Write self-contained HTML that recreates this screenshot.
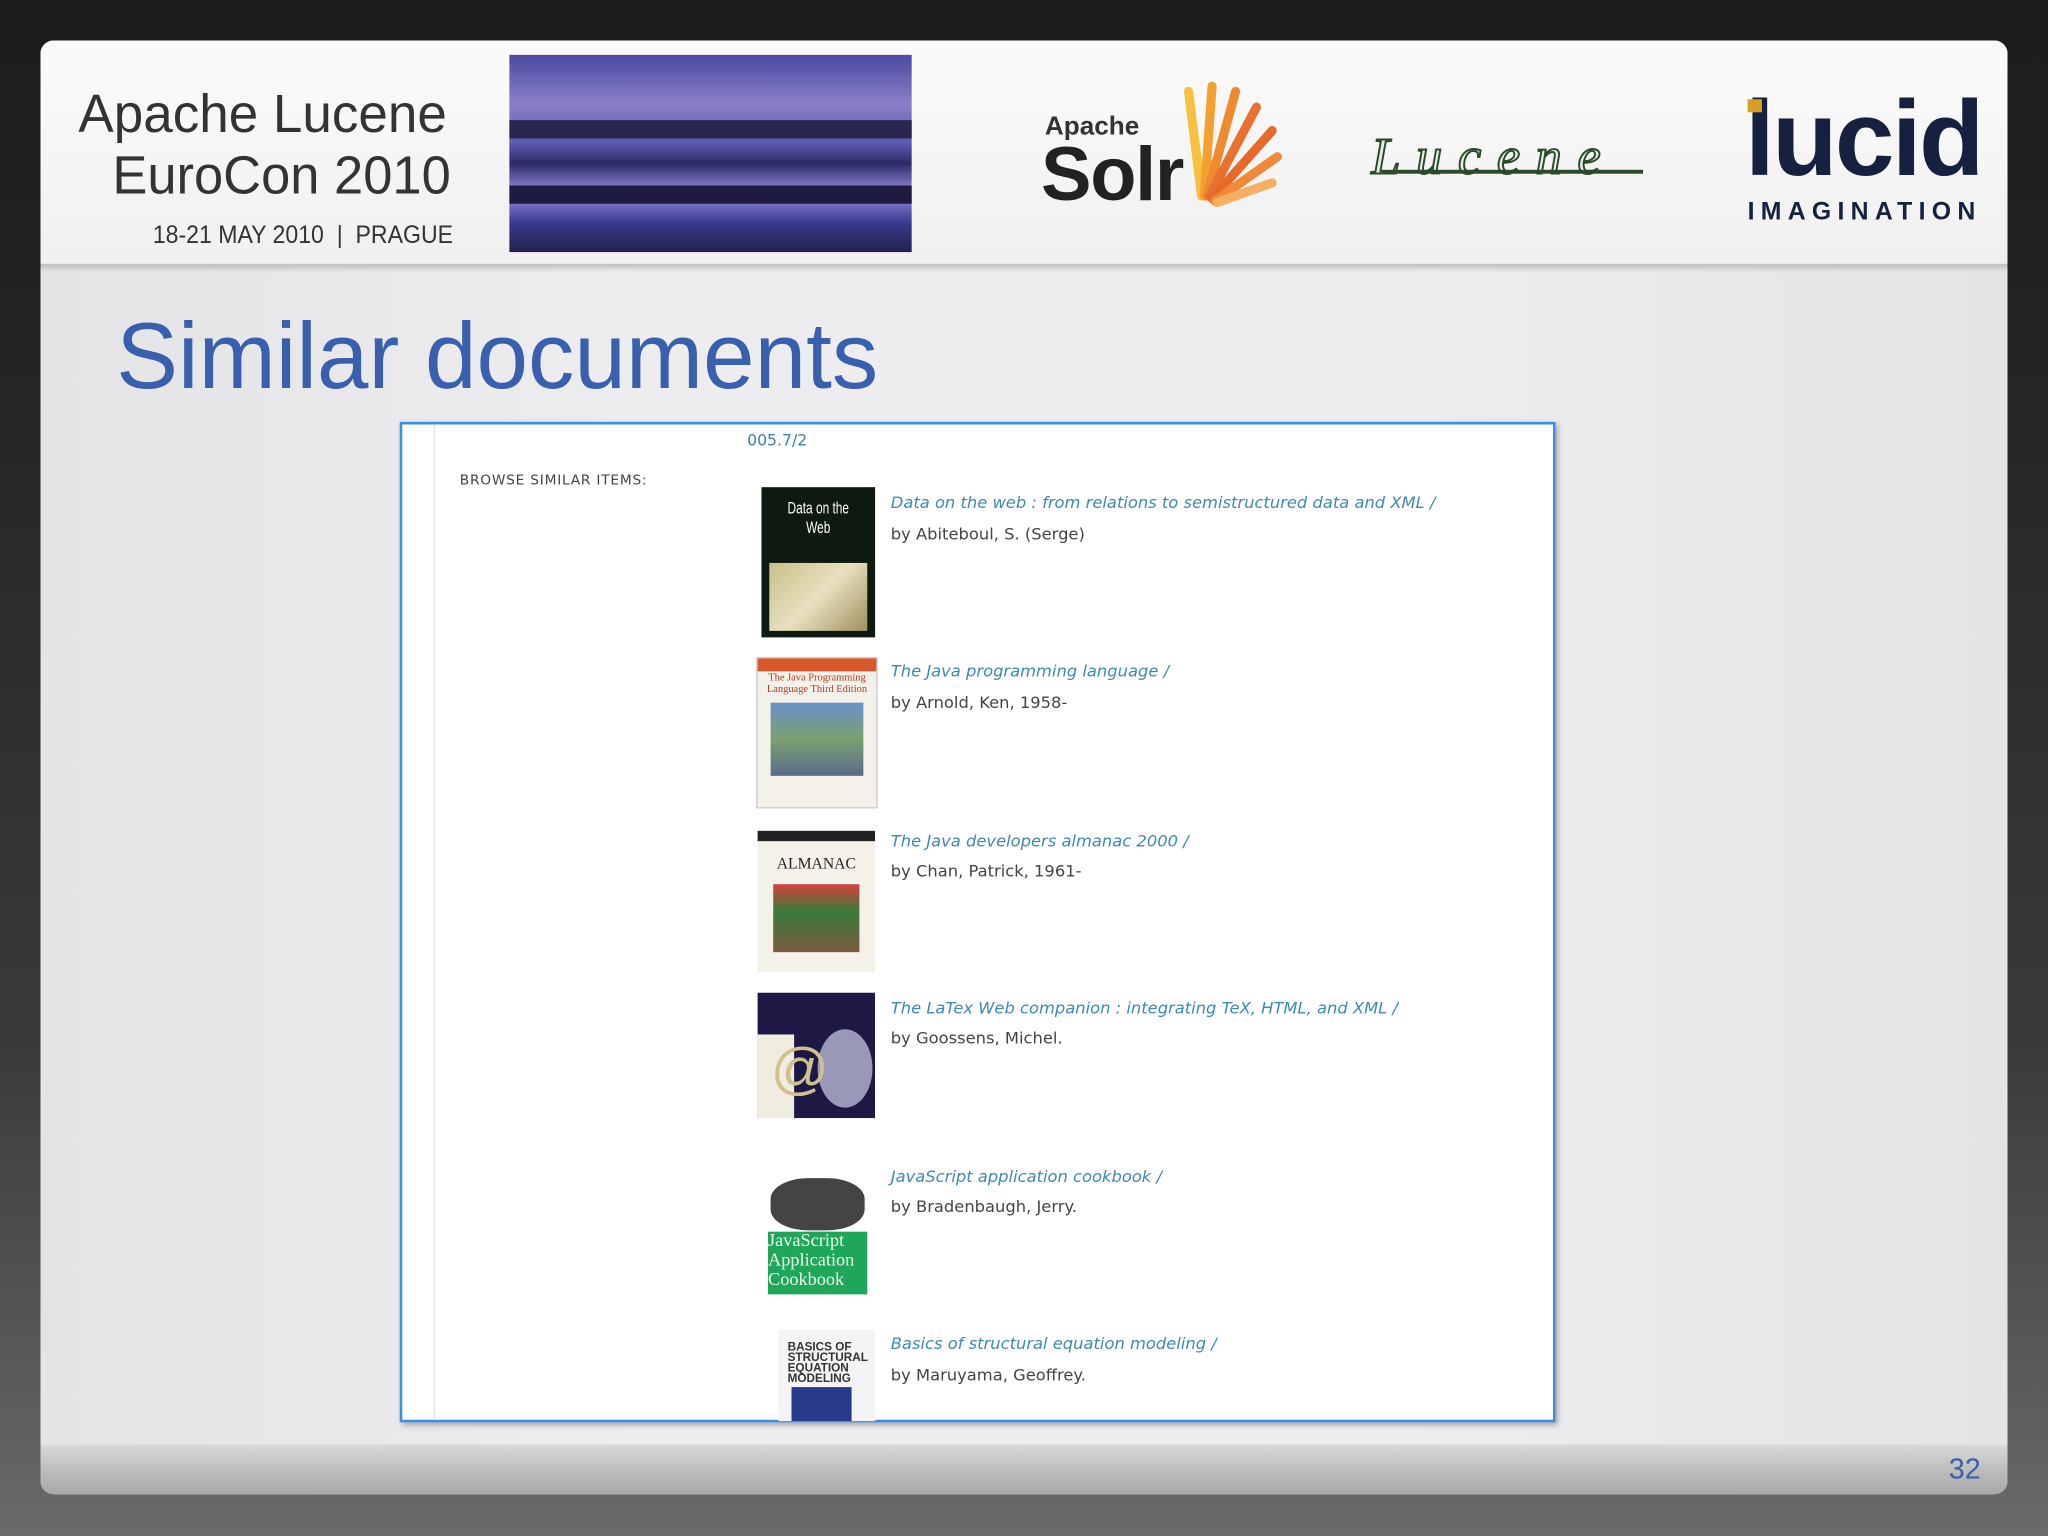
<!DOCTYPE html>
<html><head><meta charset="utf-8"><style>
html,body{margin:0;padding:0;width:2048px;height:1536px;overflow:hidden;background:#1d1d1d}
#w{position:absolute;left:0;top:0;width:1568px;height:1176px;transform:scale(1.306122);transform-origin:0 0;background:linear-gradient(#1c1c1c 0,#252525 300px,#3a3a3a 800px,#6a6a6a 1176px);font-family:"Liberation Sans",sans-serif}
.slide{position:absolute;left:31px;top:31px;width:1506px;height:1113px;border-radius:10px;overflow:hidden;background:linear-gradient(90deg,#e4e4e6,#ededef 30%,#ededef 70%,#e4e4e6)}
.hdr{position:absolute;left:0;top:0;width:1506px;height:171px;background:linear-gradient(#fbfbfb,#f0f0f0);border-bottom:2px solid #c4c4c4;box-shadow:0 2px 3px rgba(0,0,0,.15)}
.ftr{position:absolute;left:0;top:1075px;width:1506px;height:38px;background:linear-gradient(#d9d9d9,#b9b9b9 60%,#a8a8a8)}
.abs{position:absolute;white-space:nowrap}
.box{position:absolute;left:306px;top:323px;width:881px;height:762px;border:2px solid #3b8fe2;background:#fff;box-shadow:2px 2px 4px rgba(0,0,0,.3)}
.t{position:absolute;left:682px;font-family:"DejaVu Sans",sans-serif;font-size:12.5px;white-space:nowrap}
.ti{color:#3f8aae;font-style:italic}
.au{color:#444}
.cv{position:absolute;overflow:hidden}
</style></head><body><div id="w">
<div class="slide">
 <div class="hdr"></div>
 <div class="ftr"></div>
</div>
<div class="abs" style="left:60px;top:64px;font-size:41px;color:#333;transform:scaleX(.99);transform-origin:0 0;line-height:46px">Apache Lucene</div>
<div class="abs" style="left:86px;top:111px;font-size:41px;color:#333;transform:scaleX(.98);transform-origin:0 0;line-height:46px">EuroCon 2010</div>
<div class="abs" style="left:117px;top:170px;font-size:19px;color:#333;transform:scaleX(.93);transform-origin:0 0">18-21 MAY 2010 &nbsp;|&nbsp; PRAGUE</div>
<div class="abs" style="left:390px;top:42px;width:308px;height:151px;background:linear-gradient(#4a4aa0 0,#8a80c8 25%,#5a58b0 45%,#2a2a66 55%,#9a90e0 70%,#3a3a90 85%,#22224a 100%)">
 <div style="position:absolute;left:0;top:50px;width:308px;height:14px;background:#2a2450"></div>
 <div style="position:absolute;left:0;top:100px;width:308px;height:14px;background:#1e1a40"></div>
</div>
<div class="abs" style="left:800px;top:86px;font-size:20px;color:#333;font-weight:bold">Apache</div>
<div class="abs" style="left:797px;top:100px;font-size:58px;color:#222;font-weight:bold;letter-spacing:-1px">Solr</div>
<svg class="abs" style="left:880px;top:60px" width="105" height="100" viewBox="0 0 105 100">
 <g stroke-width="7" stroke-linecap="round">
 <line x1="40" y1="90" x2="30" y2="10" stroke="#f7c040"/>
 <line x1="42" y1="90" x2="48" y2="6" stroke="#f4a030"/>
 <line x1="44" y1="90" x2="66" y2="10" stroke="#ee8a30"/>
 <line x1="46" y1="90" x2="82" y2="22" stroke="#e87030"/>
 <line x1="48" y1="92" x2="94" y2="40" stroke="#e86a2a"/>
 <line x1="50" y1="94" x2="98" y2="60" stroke="#ef8a3a"/>
 <line x1="52" y1="95" x2="94" y2="80" stroke="#f4b060"/>
 </g></svg>
<div class="abs" style="left:1050px;top:96px;font-size:40px;font-style:italic;color:#e6efe6;-webkit-text-stroke:1.5px #2a4a2a;font-family:'Liberation Serif',serif;letter-spacing:12px">Lucene</div>
<div class="abs" style="left:1058px;top:130px;width:200px;height:3px;background:#2a4a2a"></div>
<div class="abs" style="left:1336px;top:60px;font-size:82px;font-weight:bold;color:#15213e;letter-spacing:-2px">lucid</div>
<div class="abs" style="left:1338px;top:76px;width:11px;height:10px;background:#d8a020"></div>
<div class="abs" style="left:1338px;top:152px;font-size:19px;font-weight:bold;color:#15213e;letter-spacing:4.8px">IMAGINATION</div>
<div class="abs" style="left:89px;top:232px;font-size:72px;color:#3a5fad;transform:scaleX(.985);transform-origin:0 0">Similar documents</div>
<div class="abs" style="left:1492px;top:1112px;font-size:22px;color:#3a5fad">32</div>
<div class="box">
 <div style="position:absolute;left:24px;top:0;width:1px;height:762px;background:#e2e2e2"></div>
</div>
<div class="t" style="left:572px;top:330px;color:#3f7fae;font-size:12px">005.7/2</div>
<div class="t" style="left:352px;top:362px;color:#444;font-size:10.5px;letter-spacing:.6px">BROWSE SIMILAR ITEMS:</div>

<div class="cv" style="left:583px;top:373px;width:87px;height:115px;background:#0e1a10">
 <div style="color:#fff;font-size:13px;text-align:center;margin-top:8px;transform:scaleX(.7)">Data on the Web</div>
 <div style="margin:20px 6px 0;height:52px;background:linear-gradient(135deg,#c9c08a,#e8e0c0 50%,#a09060)"></div></div>
<div class="t ti" style="top:377px">Data on the web : from relations to semistructured data and XML /</div>
<div class="t au" style="top:401px">by Abiteboul, S. (Serge)</div>

<div class="cv" style="left:579px;top:503px;width:91px;height:114px;background:#f4f0ea;border:1px solid #ccc">
 <div style="height:10px;background:#d8582a"></div>
 <div style="color:#b04020;font-size:8px;text-align:center;font-family:'Liberation Serif',serif">The Java Programming Language Third Edition</div>
 <div style="margin:6px 10px 0;height:56px;background:linear-gradient(#6a90c8,#7aa070 50%,#5a6a8a)"></div></div>
<div class="t ti" style="top:506px">The Java programming language /</div>
<div class="t au" style="top:530px">by Arnold, Ken, 1958-</div>

<div class="cv" style="left:580px;top:636px;width:90px;height:108px;background:#f4f2e8">
 <div style="height:8px;background:#222"></div>
 <div style="color:#222;font-size:12px;text-align:center;font-family:'Liberation Serif',serif;margin-top:10px">ALMANAC</div>
 <div style="margin:8px 12px 0;height:52px;background:linear-gradient(#d84040,#3a7a3a 40%,#7a5a40)"></div></div>
<div class="t ti" style="top:636px">The Java developers almanac 2000 /</div>
<div class="t au" style="top:659px">by Chan, Patrick, 1961-</div>

<div class="cv" style="left:580px;top:760px;width:90px;height:112px;background:#fff">
 <div style="height:96px;background:#1e1844"></div>
 <div style="position:absolute;left:0;top:32px;width:28px;height:64px;background:#f0ede0"></div>
 <div style="position:absolute;left:46px;top:28px;width:42px;height:60px;border-radius:50%;background:#9a98b8"></div>
 <div style="position:absolute;left:10px;top:34px;font-size:44px;color:#d0c090">@</div></div>
<div class="t ti" style="top:764px">The LaTex Web companion : integrating TeX, HTML, and XML /</div>
<div class="t au" style="top:787px">by Goossens, Michel.</div>

<div class="cv" style="left:586px;top:888px;width:82px;height:112px;background:#fff">
 <div style="position:absolute;left:4px;top:14px;width:72px;height:40px;border-radius:40%;background:#444"></div>
 <div style="position:absolute;left:2px;top:55px;width:76px;height:48px;background:#1fa65a;color:#e8ffe8;font-size:14px;line-height:15px;font-family:'Liberation Serif',serif">JavaScript Application Cookbook</div></div>
<div class="t ti" style="top:893px">JavaScript application cookbook /</div>
<div class="t au" style="top:916px">by Bradenbaugh, Jerry.</div>

<div class="cv" style="left:596px;top:1018px;width:74px;height:70px;background:#f4f4f6">
 <div style="font-size:9px;font-weight:bold;color:#333;margin:9px 0 0 7px;line-height:8px">BASICS OF<br>STRUCTURAL<br>EQUATION<br>MODELING</div>
 <div style="position:absolute;left:10px;top:44px;width:46px;height:26px;background:#2a3a8a"></div></div>
<div class="t ti" style="top:1021px">Basics of structural equation modeling /</div>
<div class="t au" style="top:1045px">by Maruyama, Geoffrey.</div>
</div></body></html>
